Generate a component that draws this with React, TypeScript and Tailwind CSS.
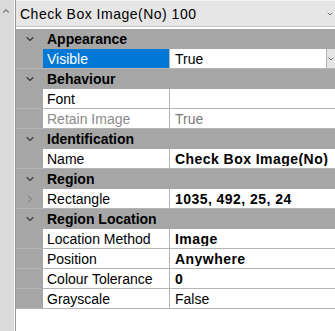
import { ChevronDown, ChevronRight, ChevronUp } from "lucide-react";

type Prop = { label: string; value: string; bold?: boolean; dim?: boolean; selected?: boolean; dropdown?: boolean; expand?: boolean };
type Section = { title: string; props: Prop[] };

const sections: Section[] = [
  { title: "Appearance", props: [{ label: "Visible", value: "True", selected: true, dropdown: true }] },
  {
    title: "Behaviour",
    props: [
      { label: "Font", value: "" },
      { label: "Retain Image", value: "True", dim: true },
    ],
  },
  { title: "Identification", props: [{ label: "Name", value: "Check Box Image(No)", bold: true }] },
  { title: "Region", props: [{ label: "Rectangle", value: "1035, 492, 25, 24", bold: true, expand: true }] },
  {
    title: "Region Location",
    props: [
      { label: "Location Method", value: "Image", bold: true },
      { label: "Position", value: "Anywhere", bold: true },
      { label: "Colour Tolerance", value: "0", bold: true },
      { label: "Grayscale", value: "False" },
    ],
  },
];

function HeaderRow({ title }: { title: string }) {
  return (
    <div className="flex h-[20px] bg-[#a6a6a6] border-b border-[#a6a6a6]">
      <div className="w-[27px] flex items-center justify-center">
        <ChevronDown size={12} strokeWidth={2.25} className="text-[#3c3c3c]" />
      </div>
      <div className="pl-[4px] flex items-center font-bold text-black">{title}</div>
    </div>
  );
}

function PropRow({ p }: { p: Prop }) {
  return (
    <div className="flex h-[20px] border-b border-[#b4b4b4] bg-[#a6a6a6]">
      <div className="w-[27px] flex items-center justify-center">
        {p.expand && <ChevronRight size={12} strokeWidth={2} className="text-[#6e6e6e]" />}
      </div>
      <div
        className={`w-[126px] flex items-center pl-[4px] ${
          p.selected ? "bg-[#0078d7] text-white" : p.dim ? "bg-white text-[#8a8a8a]" : "bg-white text-black"
        }`}
      >
        {p.label}
      </div>
      <div className="w-px bg-[#b4b4b4]" />
      <div
        className={`flex-1 flex items-center bg-white pl-[5px] ${p.bold ? "font-bold tracking-[0.45px]" : ""} ${
          p.dim ? "text-[#7a7a7a]" : "text-black"
        }`}
      >
        <span className="flex-1 whitespace-nowrap overflow-hidden">{p.value}</span>
        {p.dropdown && (
          <span className="w-[9px] h-[19px] bg-[#e5e5e5] border-l border-[#b4b4b4] flex items-center justify-center">
            <ChevronDown size={8} strokeWidth={2.5} className="text-[#555]" />
          </span>
        )}
      </div>
    </div>
  );
}

export default function App() {
  return (
    <div className="w-[335px] h-[331px] flex bg-white overflow-hidden text-[14px] leading-none" style={{ fontFamily: '"Liberation Sans", Arial, sans-serif' }}>
      <div className="w-[14px] bg-[#dadada] flex flex-col items-center pt-[6px]">
        <ChevronUp size={10} strokeWidth={2.5} className="text-[#555] -ml-[2px]" />
      </div>
      <div className="w-px bg-[#f4f4f4]" />
      <div className="w-px bg-[#9a9a9a]" />
      <div className="flex-1 flex flex-col min-w-0">
        <div className="h-[27px] bg-[#e6e6e6] border-t border-[#f4f4f4] border-b border-b-[#c8c8c8] flex items-center pl-[4px] text-black">
          <span className="flex-1 whitespace-nowrap tracking-[0.5px]">Check Box Image(No) 100</span>
          <ChevronDown size={8} strokeWidth={2.5} className="text-[#555] mr-[1px]" />
        </div>
        <div className="h-[2px] bg-white" />
        {sections.map((s) => (
          <div key={s.title}>
            <HeaderRow title={s.title} />
            {s.props.map((p) => (
              <PropRow key={p.label} p={p} />
            ))}
          </div>
        ))}
        <div className="flex-1 bg-white" />
      </div>
    </div>
  );
}
